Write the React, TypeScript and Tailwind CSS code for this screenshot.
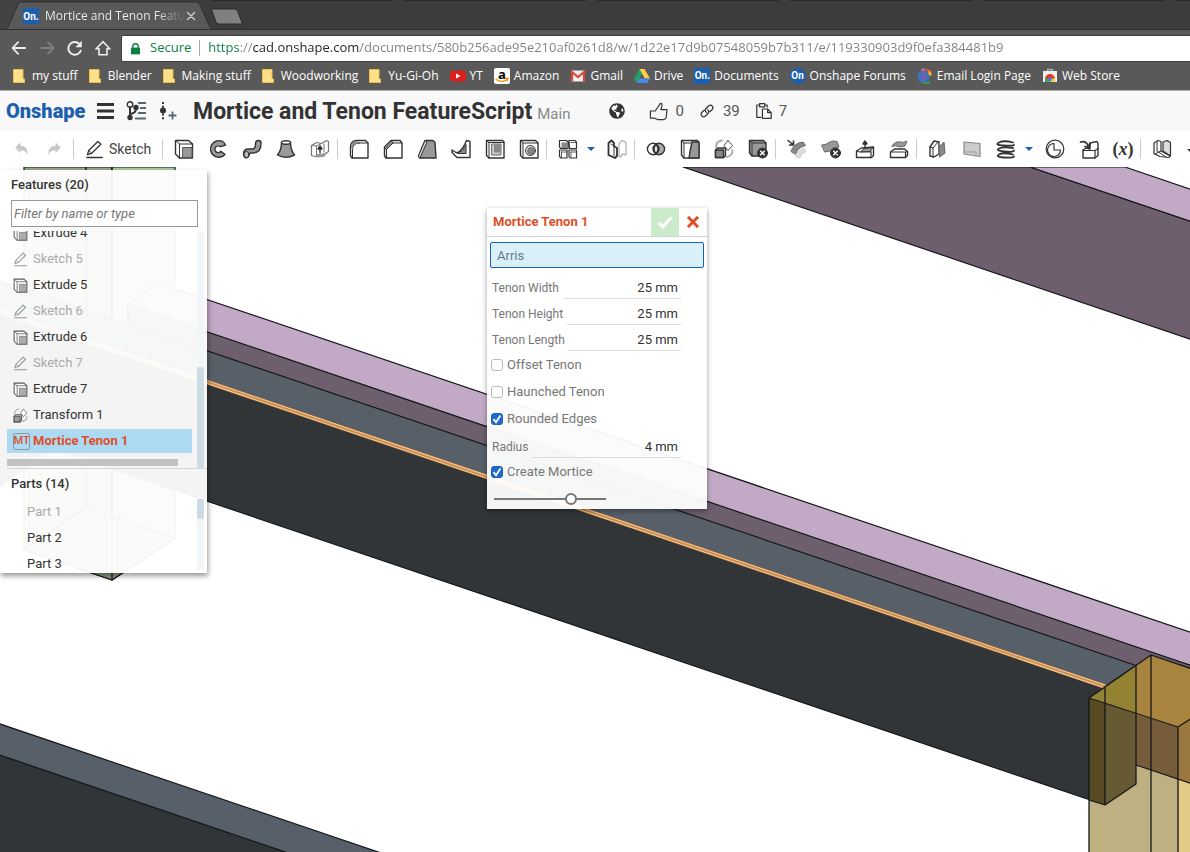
import type { ReactNode } from "react";
import clsx from "clsx";
import { FaGlobeAmericas } from "react-icons/fa";

/* ---------- shared bits ---------- */

function Icon({ children, className = "size-5" }: { children: ReactNode; className?: string }) {
  return (
    <svg
      viewBox="0 0 20 20"
      className={clsx("shrink-0", className)}
      fill="none"
      stroke="#333"
      strokeWidth="1.4"
      strokeLinejoin="round"
      strokeLinecap="round"
      aria-hidden="true"
    >
      {children}
    </svg>
  );
}

const extrudeIcon = (
  <>
    <path d="M1.5 1.5h13l4 3.500v14h-13l-4-4z" fill="#fff" />
    <path d="M1.500 1.500l4 3.500h13M5.500 5v14" strokeWidth="1" />
    <rect x="9" y="8.500" width="9" height="10" fill="#999" stroke="#555" strokeWidth="1" />
  </>
);

const pencilIcon = (
  <>
    <path d="M2 18.300h16" strokeWidth="1.600" />
    <path d="M2.500 15.500l1.500-4.500L13.500 1.500l3.200 3L7 14z" />
    <path d="M4 11l3 3" strokeWidth="1" />
  </>
);

const transformIcon = (
  <>
    <path d="M2 8c0-4 2-6 6-6.500M18.500 11c0 4-2 6.500-6 7" stroke="#aaa" strokeWidth="1.800" />
    <path d="M1.500 11l2-2h8v7.500l-2 2h-8z" fill="#ddd" />
    <path d="M1.500 11h8v7.500h-8z" fill="#888" />
    <path d="M14 1.500l4.500 5-4.500 5-4-5z" fill="#fff" strokeWidth="1" strokeDasharray="2 1" />
  </>
);

const deleteBadge = (
  <>
    <circle cx="14.500" cy="14" r="5" fill="#333" stroke="#333" strokeWidth="1" />
    <path d="M12.700 12.200l3.600 3.600M16.300 12.200l-3.600 3.600" stroke="#fff" strokeWidth="1.500" />
  </>
);

/* ---------- browser chrome ---------- */

function OnBadge({ round = false }: { round?: boolean }) {
  return (
    <span
      className={clsx(
        "flex size-4 shrink-0 items-center justify-center bg-[#1c5fae] font-[Roboto] text-[10px] font-bold text-white",
        round && "rounded-full",
      )}
    >
      {round ? "On" : "On."}
    </span>
  );
}

function TabStrip() {
  return (
    <div className="relative flex h-[30px] shrink-0 overflow-hidden border-b border-[#2e2e2e] bg-[#3c3c3c]">
      <div className="absolute top-0 left-[211px] flex gap-[11px]">
        {[0, 1, 2, 3, 4, 5].map((i) => (
          <span key={i} className="h-px w-[182px] bg-[#2a2a2a]" />
        ))}
      </div>
      <div className="relative flex h-[30px] w-[213px] shrink-0 items-center pt-[2px] pl-[23px]">
        <svg viewBox="0 0 213 30" className="absolute inset-0 h-[30px] w-[213px]" aria-hidden="true">
          <path d="M0 0h22L8 29H0z" fill="#434343" />
          <path d="M0 30q7 0 9-5L18 4q1-2 3-2h175q3 0 4 3l9 20q2 5 4 5z" fill="#595959" stroke="#2e2e2e" />
        </svg>
        <div className="relative flex items-center gap-[6px]">
          <OnBadge />
          <span className="bg-[linear-gradient(90deg,#f4f4f4_110px,#595959_140px)] bg-clip-text text-xs whitespace-nowrap text-transparent">
            Mortice and Tenon Featu
          </span>
        </div>
        <button aria-label="Close tab" className="relative flex size-3 shrink-0 items-center justify-center">
          <Icon className="size-[10px]">
            <path d="M3 3l14 14M17 3L3 17" stroke="#c8c8c8" strokeWidth="3" />
          </Icon>
        </button>
      </div>
      <button aria-label="New tab" className="mt-2 h-[17px]">
        <svg viewBox="0 0 33 17" className="-ml-[3px] h-[17px] w-[33px]" aria-hidden="true">
          <path d="M1.500 1h23q2 0 3 2l5 13H9q-2 0-3-2z" fill="#808080" stroke="#2e2e2e" />
        </svg>
      </button>
    </div>
  );
}

function AddressBar() {
  return (
    <div className="flex h-8 shrink-0 items-center bg-[#595959] pt-1 pl-[11px]">
      <div className="flex w-[110px] shrink-0 gap-3">
        <button aria-label="Back">
          <Icon className="size-4">
            <path d="M18.500 10H2M9.500 2L2 10l7.500 8" stroke="#eee" strokeWidth="2.200" strokeLinecap="butt" strokeLinejoin="miter" />
          </Icon>
        </button>
        <button aria-label="Forward">
          <Icon className="size-4">
            <path d="M1.500 10H18M10.500 2L18 10l-7.500 8" stroke="#808080" strokeWidth="2.200" strokeLinecap="butt" strokeLinejoin="miter" />
          </Icon>
        </button>
        <button aria-label="Reload">
          <Icon className="size-4">
            <path d="M17.500 12.500A8 8 0 1 1 15.300 4.700" stroke="#eee" strokeWidth="2.400" strokeLinecap="butt" />
            <path d="M18.500 1v8h-8z" fill="#eee" stroke="none" />
          </Icon>
        </button>
        <button aria-label="Home">
          <Icon className="size-4">
            <path d="M1.500 11L10 2l8.500 9H15v7.500H5V11z" stroke="#eee" strokeWidth="2" strokeLinejoin="miter" />
          </Icon>
        </button>
      </div>
      <div className="flex h-[27px] min-w-0 flex-1 items-center rounded-l-[2px] border border-r-0 border-[#3f3f3f] bg-white pl-[9px]">
        <Icon className="h-[13px] w-[9px]">
          <path d="M4 9V5.500a6 6 0 0 1 12 0V9" stroke="#0b8043" strokeWidth="3" />
          <rect x="-1" y="8" width="22" height="15" fill="#0b8043" stroke="none" />
        </Icon>
        <span className="ml-[10px] text-[13px] text-[#0b8043]">Secure</span>
        <span className="mx-2 h-4 w-px shrink-0 bg-[#aaa]" />
        <input
          aria-label="Address"
          className="min-w-0 flex-1 bg-[linear-gradient(90deg,#0b8043_0_31px,#888_31px_45px,#222_45px_152px,#808080_152px)] bg-clip-text text-[13px] text-transparent outline-none"
          defaultValue="https://cad.onshape.com/documents/580b256ade95e210af0261d8/w/1d22e17d9b07548059b7b311/e/119330903d9f0efa384481b9"
        />
      </div>
    </div>
  );
}

const folder = (
  <svg viewBox="0 0 12 14" className="mr-[3px] h-[14px] w-3 shrink-0" aria-hidden="true">
    <path d="M.5.500h9.500v9.500h1.500v3.500H.5z" fill="#ffe08a" stroke="#eec04a" />
  </svg>
);

const bookmarks: { label: string; icon: ReactNode }[] = [
  { label: "my stuff", icon: folder },
  { label: "Blender", icon: folder },
  { label: "Making stuff", icon: folder },
  { label: "Woodworking", icon: folder },
  { label: "Yu-Gi-Oh", icon: folder },
  {
    label: "YT",
    icon: (
      <svg viewBox="0 0 16 16" className="size-4 shrink-0" aria-hidden="true">
        <rect y="2.500" width="16" height="11" rx="2.500" fill="#d8201f" />
        <path d="M6 5.500v5L10.500 8z" fill="#fff" />
      </svg>
    ),
  },
  {
    label: "Amazon",
    icon: (
      <span className="relative flex size-4 shrink-0 items-center justify-center rounded-[2px] bg-white pb-1 text-[13px] leading-none font-bold text-black">
        a
        <svg viewBox="0 0 16 16" className="absolute inset-0" aria-hidden="true">
          <path d="M1.500 11q6 4.500 11.500.5M11 10.500l3-.3-.8 3" fill="none" stroke="#f79400" strokeWidth="1.300" />
        </svg>
      </span>
    ),
  },
  {
    label: "Gmail",
    icon: (
      <svg viewBox="0 0 16 16" className="size-4 shrink-0" aria-hidden="true">
        <rect x="1" y="2.500" width="14" height="11" fill="#eee" />
        <path d="M2 13.500V4l6 5 6-5v9.500" fill="none" stroke="#dc4437" strokeWidth="2.200" />
      </svg>
    ),
  },
  {
    label: "Drive",
    icon: (
      <svg viewBox="0 0 16 16" className="size-4 shrink-0" aria-hidden="true">
        <path d="M5.500 1L0 10.500 2.800 15 8 5.500z" fill="#1da462" />
        <path d="M5.500 1h5L16 10.500h-5.200z" fill="#ffcf48" />
        <path d="M5.400 10.500H16L13.200 15H2.800z" fill="#4688f4" />
      </svg>
    ),
  },
  { label: "Documents", icon: <OnBadge /> },
  { label: "Onshape Forums", icon: <OnBadge round /> },
  {
    label: "Email Login Page",
    icon: (
      <svg viewBox="0 0 16 16" className="size-4 shrink-0" aria-hidden="true">
        <circle cx="6.500" cy="8.500" r="6" fill="#3976bd" />
        <path d="M4 4.500q4 0 5 3t-2 6Q3 10 4 4.500z" fill="#7a5ca8" />
        <path d="M9.500.5l5 2.500 1 4-2.500.5-1-3.500-3-1z" fill="#ef5a2a" />
        <path d="M11 3l2.500 1.500L14 8l-2-1z" fill="#f5d23c" />
        <path d="M3.500 1L8 .3 8.500 2.500 5 3z" fill="#d46a9c" />
        <path d="M4 14q4 1.500 9-1l-1 2.700H6z" fill="#38a860" />
      </svg>
    ),
  },
  {
    label: "Web Store",
    icon: (
      <svg viewBox="0 0 16 16" className="size-4 shrink-0" aria-hidden="true">
        <path d="M5.500 4V1.500h5V4" fill="none" stroke="#aaa" strokeWidth="1.500" />
        <rect x="1" y="3" width="14" height="11" fill="#eee" />
        <path d="M3 11a5 5 0 0 1 10 0z" fill="#e13a2e" />
        <path d="M3 10.500h3L8 14H3z" fill="#3ba757" />
        <path d="M10 10.500h3V14H8z" fill="#fbcf33" />
        <circle cx="8" cy="11.500" r="1.900" fill="#3d7fe8" />
      </svg>
    ),
  },
];

function BookmarksBar() {
  return (
    <nav className="flex h-[29px] shrink-0 items-center gap-[11px] overflow-hidden border-b border-[#b4b0b0] bg-[#595959] pl-[13px] text-xs">
      {bookmarks.map((b) => (
        <a key={b.label} href="#" className="flex shrink-0 items-center gap-1 whitespace-nowrap text-white">
          {b.icon}
          {b.label}
        </a>
      ))}
    </nav>
  );
}

/* ---------- document header ---------- */

function DocumentHeader() {
  return (
    <header className="flex h-10 shrink-0 items-center overflow-hidden bg-[#f8f8f8] pl-[6px] whitespace-nowrap text-[#333]">
      <a href="#" className="w-[91px] shrink-0 text-xl font-black text-[#1c5fae]">
        Onshape
      </a>
      <button aria-label="Menu" className="mr-3 shrink-0">
        <svg viewBox="0 0 17 16" className="h-4 w-[17px]" aria-hidden="true">
          <path d="M0 1.500h17M0 8h17M0 14.500h17" stroke="#333" strokeWidth="2.800" />
        </svg>
      </button>
      <button aria-label="Versions" className="mr-3 shrink-0">
        <Icon>
          <circle cx="4" cy="3.500" r="2.800" />
          <circle cx="10" cy="6.500" r="2" fill="#333" />
          <path d="M4 6.500V17M10 8q0 4-6 5" strokeWidth="2" />
          <circle cx="4" cy="16.500" r="2" fill="#333" />
          <path d="M12 2h8M14 7h6M12 12h8M9 17.500h11" stroke="#5b6770" strokeWidth="1.800" strokeLinecap="butt" />
        </Icon>
      </button>
      <button aria-label="Create version" className="mr-[15px] shrink-0">
        <Icon>
          <circle cx="5" cy="9.500" r="3" fill="#333" stroke="none" />
          <path d="M5 1v18" strokeWidth="2" strokeDasharray="2 1.800" strokeLinecap="butt" />
          <path d="M14.500 10.500v8M10.500 14.500h8" stroke="#5b6770" strokeWidth="1.800" strokeLinecap="butt" />
        </Icon>
      </button>
      <h1 className="pt-[3px] text-[23px] font-bold">Mortice and Tenon FeatureScript</h1>
      <span className="mr-[39px] ml-[5px] pt-[7px] text-[15px] text-[#888]">Main</span>
      <button aria-label="Public" className="mr-6 shrink-0">
        <FaGlobeAmericas className="size-4 text-[#333]" />
      </button>
      <div className="flex shrink-0 items-center text-[15px] text-[#555]">
        <button className="mr-4 flex items-center gap-[7px]">
          <Icon className="size-[19px]">
            <path d="M1.500 9.500h5L12 1.500q2.500 0 1.500 3L12.500 8H19l-1 9-2 1.500H9L6 17H1.500z" strokeWidth="1.200" />
          </Icon>
          0
        </button>
        <button className="mr-4 flex items-center gap-[9px]">
          <Icon className="size-[14px]">
            <path d="M9 12q-3-3 0-6l3.500-3.500q3-2 5 .5t0 5L14 11M11 8q3 3 0 6l-3.500 3.500q-3 2-5-.5t0-5L6 9" strokeWidth="1.800" />
          </Icon>
          39
        </button>
        <button className="flex items-center gap-[7px]">
          <Icon className="size-4">
            <path d="M6 18H1V2.500h3.500M11 2.500h3V5" strokeWidth="1.500" />
            <path d="M4.500.8H11v4H4.500z" strokeWidth="1.500" />
            <path d="M8 7.500h6.500l4.500 4.500v7.200H8zM14.500 7.500V12H19" strokeWidth="1.500" />
          </Icon>
          7
        </button>
      </div>
    </header>
  );
}

/* ---------- feature toolbar ---------- */

type Tool = { name: string; icon: ReactNode; menu?: boolean };

const toolGroups: Tool[][] = [
  [
    { name: "Extrude", icon: extrudeIcon },
    {
      name: "Revolve",
      icon: <path d="M14.500 2.500A8.300 8.300 0 1 0 17 15.500l-4-3.300a3.400 3.400 0 1 1-.5-4.500l5-1.500q-.7-2.500-3-3.700z" fill="#999" />,
    },
    {
      name: "Sweep",
      icon: (
        <>
          <path d="M1.500 15q0-5 5-5h4q3 0 3-5 0-3.500 3-3.500T19 4.500q0 9-8 9.500H9q-2 0-2 3-1 2-3 2t-2.500-4z" fill="#999" />
          <ellipse cx="4.500" cy="15.500" rx="2.500" ry="3" fill="#bbb" strokeWidth="1" />
        </>
      ),
    },
    {
      name: "Loft",
      icon: (
        <>
          <path d="M5.500 3.500Q5.500 11 1.500 16q8 4.500 17 0-4-5-4-12.500z" fill="#999" />
          <ellipse cx="10" cy="3.500" rx="4.500" ry="1.800" fill="#fff" />
        </>
      ),
    },
    {
      name: "Thicken",
      icon: (
        <>
          <path d="M1.500 6.500l5-3 5 1 5-3 2 1v10l-5 3.500-5-.5-3 2-4-1z" fill="#fff" stroke="#777" strokeWidth="1.200" />
          <path d="M7 16l11-3-4 5-8 .5z" fill="#999" stroke="none" />
          <path d="M1.500 6.500l5 .5 5-2.500M6.500 7v9M14 5v8" stroke="#777" strokeWidth="1" />
          <path d="M10 14V8M8 10l2-3 2 3z" fill="#333" />
        </>
      ),
    },
  ],
  [
    {
      name: "Fillet",
      icon: (
        <>
          <path d="M8 1.500h8.500l2.500 2.500v15H3l-1.500-2V8q0-6.500 6.500-6.500z" fill="#fff" />
          <path d="M10 4h9M3.500 19V11q0-7 7-7" strokeWidth="1" />
          <path d="M2 8q0-6 6-6l2 2q-6 0-6.500 6.500z" fill="#888" stroke="none" />
        </>
      ),
    },
    {
      name: "Chamfer",
      icon: (
        <>
          <path d="M8 1.500h9L19 4v15H3l-1.500-2V8z" fill="#fff" />
          <path d="M10 4h9M3.500 19v-8.500L10 4" strokeWidth="1" />
          <path d="M1.500 8L8 1.500 10 4l-6.500 6.500z" fill="#888" strokeWidth="1" />
        </>
      ),
    },
    {
      name: "Draft",
      icon: (
        <>
          <path d="M8 1.500h8l2 2 1 15.500H3l-1.500-2z" fill="#999" />
          <path d="M1.500 17L8 1.500 10 3 3 19z" fill="#ddd" strokeWidth="1" />
        </>
      ),
    },
    {
      name: "Rib",
      icon: (
        <>
          <path d="M15.500 1.500l3.500 1v16H6l-5-5v-2.500l4 2.500 2 0q5-3 8.500-12z" fill="#fff" />
          <path d="M15 6v8.500H6.500Q12.500 12 15 6z" fill="#888" strokeWidth="1" />
        </>
      ),
    },
    {
      name: "Shell",
      icon: (
        <>
          <path d="M1.500 1.500h16L19 3v16H4l-2.500-2.500z" fill="#fff" />
          <path d="M4 19V3.500L1.500 1.500M4 3.500h15" strokeWidth="1" />
          <path d="M7 5h9v11H7z" fill="#ccc" stroke="#666" strokeWidth="1" />
          <path d="M9 5.500h6.500v8H9z" fill="#888" stroke="none" />
        </>
      ),
    },
    {
      name: "Hole",
      icon: (
        <>
          <path d="M1.500 1.500h15L19 4v15H4l-2.500-2.500z" fill="#fff" />
          <path d="M4 19V4L1.500 1.500M4 4h15" strokeWidth="1" />
          <circle cx="11.500" cy="11.500" r="5" fill="#ddd" strokeWidth="1" />
          <circle cx="12" cy="12" r="3.300" fill="#888" stroke="#666" strokeWidth="1" />
        </>
      ),
    },
  ],
  [
    {
      name: "Pattern",
      menu: true,
      icon: (
        <>
          <path d="M1.500 1.500h7L10 3v6.500H3L1.500 8zM11 1.500h6L18.500 3v6.500h-7zM1.500 11H9v8H3l-1.500-1.500zM11 11h7.500v8H12l-1-1.500z" fill="#fff" strokeWidth="1.200" />
          <path d="M3.500 3.500H9V9H3.500z" fill="#888" stroke="none" />
          <path d="M3.500 13H9M3.500 13v5.500M13 13h5.500M13 13v5.500M13 3.500h5" strokeWidth=".8" />
        </>
      ),
    },
    {
      name: "Mirror",
      icon: (
        <>
          <path d="M1.500 4l3-2.500L7 4v3l3 2v8l-2 2-6.500-3z" fill="#fff" strokeWidth="1.800" />
          <path d="M4 5l3 2v10" strokeWidth="1" />
          <path d="M12 17V5l3-3.500 4 2V16l-4-1-1 3z" fill="#fff" stroke="#bbb" />
        </>
      ),
    },
  ],
  [
    {
      name: "Boolean",
      icon: (
        <>
          <circle cx="12.800" cy="10" r="5.800" fill="#aaa" />
          <circle cx="7.200" cy="10" r="5.800" />
          <path d="M10 5.200q4 4.800 0 9.600-4-4.800 0-9.600z" fill="#eee" />
        </>
      ),
    },
    {
      name: "Split",
      icon: (
        <>
          <path d="M1.500 1.500h16L19 4v15H4l-2.500-3z" fill="#fff" />
          <path d="M12 3h7v16H9q1-7 3-16z" fill="#999" />
          <path d="M1.500 1.500L4 4v15M4 4h7" strokeWidth="1" />
        </>
      ),
    },
    { name: "Transform", icon: transformIcon },
    {
      name: "Delete part",
      icon: (
        <>
          <path d="M1.500 1.500h14L18 4v13H4l-2.500-3z" fill="#999" />
          <path d="M1.500 1.500L4 4h14M4 4v13" strokeWidth="1" />
          {deleteBadge}
        </>
      ),
    },
  ],
  [
    {
      name: "Offset surface",
      icon: (
        <>
          <path d="M4 12q3-8 12-9l2.500 3.500Q11 8 8.500 15z" fill="#888" stroke="#666" strokeWidth="1" />
          <path d="M9 17.500q2-7 8-8l2 3q-4 1-6 6z" fill="#ddd" stroke="#ccc" strokeWidth="1" />
          <path d="M1 1.500l5 4M6.500 2v4h-4" strokeWidth="1.600" />
        </>
      ),
    },
    {
      name: "Delete face",
      icon: (
        <>
          <path d="M1 6q4 0 7-2.500t8-1L18 8q-6 0-9 4L4 13z" fill="#999" stroke="#666" strokeWidth="1" />
          {deleteBadge}
        </>
      ),
    },
    {
      name: "Move face",
      icon: (
        <>
          <path d="M1.500 12l5-3 12-1v8.500l-2 2h-15z" fill="#fff" />
          <path d="M1.500 12.500l5 .5 9.500-.5v6" strokeWidth="1.200" />
          <path d="M6 12.500l3-3 9-1-3 4z" fill="#999" strokeWidth="1" />
          <path d="M10 9V3M8 5l2-3 2 3z" fill="#333" />
        </>
      ),
    },
    {
      name: "Replace face",
      icon: (
        <>
          <path d="M3 7q3-5 8-4 4 1 7-1l-2 5q-5 2-9 0z" fill="#999" stroke="#666" strokeWidth="1" />
          <path d="M1.500 13l4-3h10l3 2.500v4l-2 2h-15z" fill="#fff" />
          <path d="M1.500 13h15v5.500M16.500 13l2-.500" strokeWidth="1.200" />
        </>
      ),
    },
  ],
  [
    {
      name: "Offset",
      icon: (
        <>
          <path d="M2 8l4-6 5 1v12l-5 3-4-1z" fill="#fff" />
          <path d="M2 8l3 1v9M5 9l5-6" strokeWidth="1" />
          <path d="M11 8l5-5 1 11-5 4z" fill="#888" stroke="#666" strokeWidth="1" />
        </>
      ),
    },
    {
      name: "Plane",
      icon: (
        <>
          <path d="M2 3l16 1.500v13L2 15z" fill="#ccc" stroke="#888" strokeWidth="1.200" />
          <path d="M2 13h12v4" stroke="#999" strokeWidth="1" />
        </>
      ),
    },
    {
      name: "Helix",
      menu: true,
      icon: (
        <path
          d="M17 3.500Q8 1 3 3.500t5 3 10-.5M17 9Q7 7.500 3 9.500t5 3 10-1M17 15.500Q7 13 3 15.500t5 3 10-1"
          strokeWidth="1.800"
        />
      ),
    },
    {
      name: "Measure",
      icon: (
        <>
          <circle cx="10" cy="10" r="8.800" strokeWidth="1.200" />
          <path d="M9 4.500v6.500h6.500a6.500 6.500 0 1 1-6.500-6.500z" strokeWidth="1.200" />
        </>
      ),
    },
    {
      name: "Derived",
      icon: (
        <>
          <path d="M4 11l3-2 4 1V4l7-1.500 1 2v12l-3 2.500H4z" fill="#fff" />
          <path d="M4 11.500h12V19M16 11.500l3-2" strokeWidth="1.200" />
          <path d="M1.500 3q6-2 8 5M6 7.500l4 1 1-4" strokeWidth="1.800" />
        </>
      ),
    },
    {
      name: "Variable",
      icon: null,
    },
  ],
];

function MenuCaret({ label }: { label: string }) {
  return (
    <button aria-label={label} className="flex w-[15px] shrink-0 justify-center pr-1">
      <svg viewBox="0 0 8 4" className="h-1 w-2" aria-hidden="true">
        <path d="M0 0h8L4 4z" fill="#1c5fae" />
      </svg>
    </button>
  );
}

function Separator() {
  return (
    <span className="flex w-[5px] shrink-0 justify-start">
      <span className="h-5 w-px bg-[#ccc]" />
    </span>
  );
}

function FeatureToolbar() {
  return (
    <div className="relative flex h-9 shrink-0 items-center overflow-hidden bg-white pl-[6px]">
      <button aria-label="Undo" className="flex w-8 shrink-0 justify-center">
        <Icon className="size-4">
          <path d="M1.500 8L8 2v4q10 0 9 12-2-7-9-6v3z" fill="#c8c8c8" stroke="none" />
        </Icon>
      </button>
      <button aria-label="Redo" className="mr-[3px] flex w-8 shrink-0 justify-center">
        <Icon className="size-4">
          <path d="M18.500 8L12 2v4Q2 6 3 18q2-7 9-6v3z" fill="#c8c8c8" stroke="none" />
        </Icon>
      </button>
      <Separator />
      <button className="flex w-[84px] shrink-0 items-center gap-[5px] pl-[7px] text-sm text-[#444]">
        <Icon className="size-[19px]">{pencilIcon}</Icon>
        Sketch
      </button>
      {toolGroups.map((group, i) => (
        <div key={i} className="flex shrink-0 items-center">
          <Separator />
          {group.map((tool) => (
            <div key={tool.name} className="flex shrink-0 items-center">
              <button aria-label={tool.name} className="flex w-[34px] shrink-0 items-center justify-center">
                {tool.icon ? (
                  <Icon>{tool.icon}</Icon>
                ) : (
                  <span className="font-['Liberation_Serif',serif] text-lg leading-5 font-bold text-[#333]">
                    (<i>x</i>)
                  </span>
                )}
              </button>
              {tool.menu && <MenuCaret label={`${tool.name} options`} />}
            </div>
          ))}
        </div>
      ))}
      <Separator />
      <button aria-label="Sheet metal" className="flex w-[34px] shrink-0 justify-center">
        <Icon>
          <path d="M2 4l4-2.500 3 1V12l9 5-1 1.500-9-1-6-3z" fill="#fff" strokeWidth="1.200" />
          <path d="M11 3l4-1.500 3.500 2V17L11 12z" fill="#ddd" strokeWidth="1.200" />
          <path d="M5 3v9l9 6M9 12l-6 3" strokeWidth="1" />
        </Icon>
      </button>
      <button aria-label="More tools" className="ml-2 shrink-0 pt-1">
        <svg viewBox="0 0 10 5" className="h-[5px] w-[10px]" aria-hidden="true">
          <path d="M0 0h10L5 5z" fill="#333" />
        </svg>
      </button>
    </div>
  );
}

/* ---------- 3D view ---------- */

function Viewport() {
  return (
    <svg
      viewBox="0 167 1190 685"
      preserveAspectRatio="xMinYMin slice"
      className="absolute inset-0 h-full w-full"
      stroke="#15171a"
      strokeWidth="1.200"
      strokeLinejoin="round"
      role="img"
      aria-label="3D model"
    >
      {/* far post */}
      <path d="M24 167h62v340l-62 43z" fill="#94a68c" />
      <path d="M86 167h26v413l-88-30 62-43z" fill="#94a68c" />
      <path d="M112 167h63v371l-63 42z" fill="#a8c898" />
      <path d="M24 550l62-43 89 31-63 42z" fill="#8b9a80" />
      <path d="M112 167v413" />

      {/* upper right rail */}
      <path d="M683 167h347l170 57.500v118.100z" fill="#6d5f6d" />
      <path d="M1030 167h95l75 25.400v32.100z" fill="#c2aac6" />

      {/* main rail */}
      <path d="M128 304l30-21 1042 352.500v33.200L128 322z" fill="#c2aac6" />
      <path d="M128 305l1072 363.400v30L128 324z" fill="#6d5f6d" />
      <path d="M-5 279l1141 386.500-31 21L-5 310z" fill="#575f69" />
      <path d="M-5 310l1110 376v119L53 449-5 490z" fill="#313538" />
      <path d="M-5 310l1110 376.500" stroke="#8a5a2a" strokeWidth="5" />
      <path d="M-5 310l1110 376.500" stroke="#ffc990" strokeWidth="4" />
      <path d="M-5 310l1110 376.500" stroke="#c69259" strokeWidth="2" />

      {/* lower left rail */}
      <path d="M-5 722.300l390 132H290L-5 754z" fill="#575f69" />
      <path d="M-5 753.500L300 857H-5z" fill="#313538" />

      {/* near post */}
      <g stroke="none">
        <path d="M1089 698l89 29v130h-89z" fill="#beb081" />
        <path d="M1178 727l12-8v138h-12z" fill="#e3cb85" />
        <path d="M1089 698l62-43 47 16v43l-20 13z" fill="#a8843f" />
        <path d="M1089 698l47-33v49z" fill="#948233" />
        <path d="M1136 714l42 13v52l-42-14z" fill="#765c3a" />
        <path d="M1178 727l12-8v64l-12-4z" fill="#9a7840" />
        <path d="M1089 698l16 5v102l-16-5z" fill="#584a21" />
        <path d="M1105 703l31 11v70l-31 21z" fill="#655a32" />
      </g>
      <path
        d="M1089 857V698l62-43 47 16M1089 698l89 29 20-13M1178 727v130M1151 655v202M1105 686v119M1136 665v119l-31 21-16-5M1136 765l64 21.500"
        fill="none"
        strokeWidth="1.300"
      />
    </svg>
  );
}

/* ---------- feature list ---------- */

const features: { name: string; kind: "extrude" | "sketch" | "transform" | "custom" }[] = [
  { name: "Extrude 4", kind: "extrude" },
  { name: "Sketch 5", kind: "sketch" },
  { name: "Extrude 5", kind: "extrude" },
  { name: "Sketch 6", kind: "sketch" },
  { name: "Extrude 6", kind: "extrude" },
  { name: "Sketch 7", kind: "sketch" },
  { name: "Extrude 7", kind: "extrude" },
  { name: "Transform 1", kind: "transform" },
  { name: "Mortice Tenon 1", kind: "custom" },
];

const parts = ["Part 1", "Part 2", "Part 3"];

function FeatureIcon({ kind }: { kind: string }) {
  if (kind === "custom") {
    return (
      <span className="flex h-[17px] w-[17px] items-center justify-center rounded-[2px] border border-[#999] text-[11px] font-medium">
        MT
      </span>
    );
  }
  return (
    <Icon className={clsx("size-[15px]", kind === "sketch" ? "opacity-50" : "opacity-80")}>
      {kind === "extrude" ? extrudeIcon : kind === "sketch" ? pencilIcon : transformIcon}
    </Icon>
  );
}

function FeaturePanel() {
  return (
    <aside className="absolute top-[3px] left-0 h-[403px] w-[207px] overflow-hidden bg-white/95 text-[13px] text-[#333] shadow-[1px_3px_5px_rgba(0,0,0,0.4)]">
      <h2 className="flex h-[30px] items-center pl-[11px] font-medium">Features (20)</h2>
      <input
        aria-label="Filter features"
        placeholder="Filter by name or type"
        className="ml-[11px] block h-[27px] w-[187px] border border-[#999] bg-white px-[2px] italic outline-none placeholder:text-[#777]"
      />
      <div className="mt-1 flex h-[237px]">
        <div className="w-[192px] shrink-0 overflow-hidden pl-[7px]">
          <ul className="-mt-[11px]">
            {features.map((f) => (
              <li key={f.name} className="h-[26px] py-px">
                <button
                  className={clsx(
                    "flex h-6 w-full items-center pl-[6px] text-left",
                    f.kind === "sketch" && "text-[#aaa]",
                    f.kind === "custom" && "bg-[#addaf3] font-bold text-[#dd4f28]",
                  )}
                >
                  <span className="w-5 shrink-0">
                    <FeatureIcon kind={f.kind} />
                  </span>
                  {f.name}
                </button>
              </li>
            ))}
          </ul>
          <div className="mt-[5px] h-[7px] w-[171px] bg-[#c2c2c2]" />
        </div>
        <div className="ml-[5px] flex w-[7px] items-end bg-[#f3f6f9]">
          <div className="h-[101px] w-full rounded-[2px] bg-[#cddbe5]" />
        </div>
      </div>
      <h2 className="ml-[7px] flex h-[31px] items-center border-t border-[#c9d8e5] pl-1 font-medium">Parts (14)</h2>
      <div className="flex h-[71px]">
        <ul className="w-[197px]">
          {parts.map((p, i) => (
            <li key={p} className={clsx("flex h-[26px] items-center pl-[27px] leading-4", i === 0 && "text-[#aaa]")}>
              {p}
            </li>
          ))}
        </ul>
        <div className="w-[7px] bg-[#f3f6f9]">
          <div className="h-5 rounded-[2px] bg-[#cddbe5]" />
        </div>
      </div>
    </aside>
  );
}

/* ---------- Mortice Tenon dialog ---------- */

function DimensionRow({ label, value }: { label: string; value: string }) {
  return (
    <label className="flex h-[26px] items-end pr-[26px] pl-[5px] text-[#777]">
      <span className="h-[21px] shrink-0 text-xs leading-5">{label}</span>
      <input
        defaultValue={value}
        className="ml-1 h-[22px] min-w-0 flex-1 border-b border-[#ddd] bg-transparent pr-[3px] text-right text-[#333] outline-none"
      />
    </label>
  );
}

function CheckRow({ label, checked = false }: { label: string; checked?: boolean }) {
  return (
    <label className="flex h-[27px] items-center gap-1 pl-1 text-[#777]">
      <span className="grid size-3">
        <input
          type="checkbox"
          defaultChecked={checked}
          className="peer col-start-1 row-start-1 size-3 appearance-none rounded-[3px] border border-[#bbb] bg-white checked:border-[#1b62bd] checked:bg-[#1f6bcb]"
        />
        <svg
          viewBox="0 0 12 12"
          className="pointer-events-none invisible col-start-1 row-start-1 size-3 peer-checked:visible"
          aria-hidden="true"
        >
          <path d="M2.500 6.200l2.500 3L9.500 2.500" fill="none" stroke="#fff" strokeWidth="1.800" />
        </svg>
      </span>
      {label}
    </label>
  );
}

function FeatureDialog() {
  return (
    <section className="absolute top-[41px] left-[487px] h-[301px] w-[220px] bg-white/95 text-[13px] shadow-[0_2px_5px_rgba(0,0,0,0.4)]">
      <div className="flex h-[29px] border-b border-[#ced4da]">
        <h2 className="flex flex-1 items-center pl-[6px] font-bold text-[#dd4f28]">Mortice Tenon 1</h2>
        <button aria-label="Accept" className="flex w-7 items-center justify-center bg-[#cbebcb]">
          <Icon className="size-4">
            <path d="M2 11l5 5L18.500 4" stroke="#fff" strokeWidth="3.800" strokeLinecap="butt" strokeLinejoin="miter" />
          </Icon>
        </button>
        <button aria-label="Cancel" className="flex w-7 items-center justify-center">
          <Icon className="size-3">
            <path d="M1.500 1.500l17 17M18.500 1.500l-17 17" stroke="#dd4f28" strokeWidth="5" strokeLinecap="butt" />
          </Icon>
        </button>
      </div>
      <input
        aria-label="Arris"
        placeholder="Arris"
        className="mx-[3px] mt-[5px] mb-[5px] block h-[26px] w-[214px] rounded-[2px] border border-[#1c5fae] bg-[#daf0f9] px-[6px] outline-none placeholder:text-[#6b7a82]"
      />
      <DimensionRow label="Tenon Width" value="25 mm" />
      <DimensionRow label="Tenon Height" value="25 mm" />
      <DimensionRow label="Tenon Length" value="25 mm" />
      <CheckRow label="Offset Tenon" />
      <CheckRow label="Haunched Tenon" />
      <CheckRow label="Rounded Edges" checked />
      <DimensionRow label="Radius" value="4 mm" />
      <CheckRow label="Create Mortice" checked />
      <input
        type="range"
        aria-label="Opacity"
        min={0}
        max={100}
        defaultValue={71}
        className="mt-2 ml-[7px] block h-3 w-[112px] appearance-none bg-[linear-gradient(#777,#777)] bg-[length:100%_2px] bg-center bg-no-repeat [&::-webkit-slider-thumb]:size-3 [&::-webkit-slider-thumb]:appearance-none [&::-webkit-slider-thumb]:rounded-full [&::-webkit-slider-thumb]:border-2 [&::-webkit-slider-thumb]:border-[#777] [&::-webkit-slider-thumb]:bg-white"
      />
    </section>
  );
}

export default function App() {
  return (
    <div className="flex h-screen flex-col overflow-hidden bg-white font-[Roboto,sans-serif]">
      <div className="flex shrink-0 flex-col font-['Open_Sans','Noto_Sans',sans-serif]">
        <TabStrip />
        <AddressBar />
        <BookmarksBar />
      </div>
      <DocumentHeader />
      <FeatureToolbar />
      <main className="relative min-h-0 flex-1 overflow-hidden">
        <Viewport />
        <FeaturePanel />
        <FeatureDialog />
      </main>
    </div>
  );
}
